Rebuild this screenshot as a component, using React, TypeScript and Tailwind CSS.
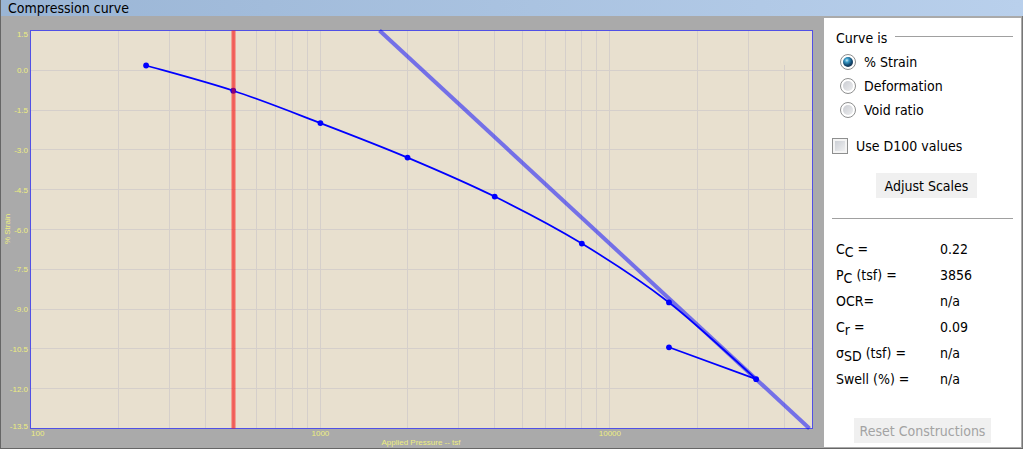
import React, { useState } from 'react';

type Mode = 'strain' | 'deformation' | 'void';

interface Reading {
    pressure: number;
    strain: number;
}

const READINGS: Reading[] = [
    { pressure: 250, strain: 0.18 },
    { pressure: 500, strain: -0.77 },
    { pressure: 1000, strain: -1.99 },
    { pressure: 2000, strain: -3.29 },
    { pressure: 4000, strain: -4.76 },
    { pressure: 8000, strain: -6.53 },
    { pressure: 16000, strain: -8.75 },
    { pressure: 32000, strain: -11.64 },
];

const REBOUND: Reading = { pressure: 16000, strain: -10.44 };

const MODES: { value: Mode; label: string }[] = [
    { value: 'strain', label: '% Strain' },
    { value: 'deformation', label: 'Deformation' },
    { value: 'void', label: 'Void ratio' },
];

const RESULTS = [
    { symbol: 'C', sub: 'C', unit: ' =', value: '0.22' },
    { symbol: 'P', sub: 'C', unit: ' (tsf) =', value: '3856' },
    { symbol: 'OCR', sub: '', unit: '=', value: 'n/a' },
    { symbol: 'C', sub: 'r', unit: ' =', value: '0.09' },
    { symbol: 'σ', sub: 'SD', unit: ' (tsf) =', value: 'n/a' },
    { symbol: 'Swell (%)', sub: '', unit: ' =', value: 'n/a' },
];

// Plot area inside the chart's own coordinate system
const LEFT = 29.5;
const RIGHT = 811.5;
const TOP = 14.5;
const BOTTOM = 412.5;
const ORIGIN_X = 29.9;
const DECADE = 289.5;

const Y_TICKS = [1.5, 0, -1.5, -3, -4.5, -6, -7.5, -9, -10.5, -12, -13.5];
const X_LINES = [
    200, 300, 400, 500, 600, 700, 800, 900, 1000,
    2000, 3000, 4000, 5000, 6000, 7000, 8000, 9000, 10000,
    20000, 30000, 40000,
];

const xOf = (pressure: number) => ORIGIN_X + (Math.log10(pressure) - 2) * DECADE;
const yOf = (strain: number) => TOP + ((1.5 - strain) / 15) * (BOTTOM - TOP);
const crisp = (n: number) => Math.floor(n) + 0.5;

// Catmull-Rom spline through the readings
const smoothPath = (readings: Reading[]) => {
    const pts = readings.map(r => [xOf(r.pressure), yOf(r.strain)]);
    let d = `M${pts[0][0]},${pts[0][1]}`;
    for (let i = 0; i < pts.length - 1; i++) {
        const p0 = pts[i - 1] || pts[i];
        const p1 = pts[i];
        const p2 = pts[i + 1];
        const p3 = pts[i + 2] || p2;
        d += ` C${p1[0] + (p2[0] - p0[0]) / 6},${p1[1] + (p2[1] - p0[1]) / 6}`;
        d += ` ${p2[0] - (p3[0] - p1[0]) / 6},${p2[1] - (p3[1] - p1[1]) / 6}`;
        d += ` ${p2[0]},${p2[1]}`;
    }
    return d;
};

const CompressionChart: React.FC = () => {
    const last = READINGS[READINGS.length - 1];

    return (
        <svg
            viewBox="0 0 823 431"
            className="block w-full h-auto font-['Liberation_Sans',sans-serif] text-[8px]"
            role="img"
            aria-label="Compression curve"
        >
            <rect x={LEFT} y={TOP} width={RIGHT - LEFT} height={BOTTOM - TOP} fill="#e8e0cf" />

            {/* Grid */}
            <g stroke="#d5cfcb">
                {X_LINES.map(p => (
                    <line key={p} x1={crisp(xOf(p))} x2={crisp(xOf(p))} y1={p === 40000 ? 49 : TOP} y2={BOTTOM} />
                ))}
                {Y_TICKS.slice(1, -1).map(s => (
                    <line key={s} x1={LEFT} x2={RIGHT} y1={crisp(yOf(s))} y2={crisp(yOf(s))} />
                ))}
            </g>
            <rect x={LEFT} y={TOP} width={RIGHT - LEFT} height={BOTTOM - TOP} fill="none" stroke="#5050e6" />

            {/* Virgin compression line */}
            <line
                x1={xOf(1600)}
                y1={TOP}
                x2={xOf(48900)}
                y2={BOTTOM}
                stroke="#0000ff"
                strokeOpacity={0.5}
                strokeWidth={4}
            />

            {/* Measured curve */}
            <path d={smoothPath(READINGS)} fill="none" stroke="#0000ff" strokeWidth={1.7} />
            <line
                x1={xOf(last.pressure)}
                y1={yOf(last.strain)}
                x2={xOf(REBOUND.pressure)}
                y2={yOf(REBOUND.strain)}
                stroke="#0000ff"
                strokeWidth={1.7}
            />
            {[...READINGS, REBOUND].map((r, i) => (
                <circle key={i} cx={xOf(r.pressure)} cy={yOf(r.strain)} r={2.9} fill="#0000ff" />
            ))}

            {/* Overburden pressure */}
            <line x1={232.5} x2={232.5} y1={TOP} y2={BOTTOM} stroke="#ff0000" strokeOpacity={0.55} strokeWidth={4} />

            {/* Axis labels */}
            <g fill="#eeee80">
                {Y_TICKS.map((s, i) => {
                    const shift = i === 0 ? 6 : i === Y_TICKS.length - 1 ? 0 : 3;
                    return (
                        <text key={s} x={27} y={yOf(s) + shift} textAnchor="end">
                            {s.toFixed(1)}
                        </text>
                    );
                })}
                <text x={30} y={420}>100</text>
                <text x={xOf(1000)} y={420} textAnchor="middle">1000</text>
                <text x={xOf(10000)} y={420} textAnchor="middle">10000</text>
                <text x={420} y={429} textAnchor="middle">Applied Pressure -- tsf</text>
                <text transform="translate(9 213) rotate(-90)" textAnchor="middle">% Strain</text>
            </g>
        </svg>
    );
};

const App: React.FC = () => {
    const [mode, setMode] = useState<Mode>('strain');
    const [useD100, setUseD100] = useState(false);

    return (
        <div className="bg-[#aaaaaa] border-l border-b border-[#666666] text-black text-sm font-['DejaVu_Sans_Condensed','Noto_Sans',sans-serif]">
            <header className="h-4 pl-[7px] flex items-center bg-linear-to-r from-[#9ab5d5] to-[#b9d0ec]">
                <h1>Compression curve</h1>
            </header>

            <div className="flex items-start">
                <main className="flex-1 min-w-0">
                    <CompressionChart />
                </main>

                <aside className="w-[199px] shrink-0 pt-[2px] pb-px pr-px border-r border-[#777777]">
                    <div className="bg-white pt-2 pb-1 pl-2 pr-2">
                        <fieldset>
                            <legend className="w-full h-6 pl-1 flex items-center gap-2">
                                Curve is
                                <span className="flex-1 h-px mb-1 bg-[#a0a0a0]" />
                            </legend>
                            {MODES.map(m => (
                                <label key={m.value} className="h-6 pl-2 flex items-center gap-2">
                                    <input
                                        type="radio"
                                        name="mode"
                                        checked={mode === m.value}
                                        onChange={() => setMode(m.value)}
                                        className="appearance-none size-4 p-[2px] rounded-full border border-[#8e8f8f] bg-[#f6f6f6] bg-clip-content bg-linear-to-br from-[#c3c6cc] to-[#f4f4f5] checked:bg-[radial-gradient(circle_at_42%_38%,#c8ecf8_0,#3b9cc8_2px,#12486f_5px,#1c3550_7px)]"
                                    />
                                    {m.label}
                                </label>
                            ))}
                        </fieldset>

                        <label className="h-6 mt-3 flex items-center gap-2">
                            <input
                                type="checkbox"
                                checked={useD100}
                                onChange={e => setUseD100(e.target.checked)}
                                className="appearance-none size-4 border border-[#8e8f8f] bg-linear-to-br from-[#c5c9d0] to-[#f6f6f6] shadow-[inset_0_0_0_2px_#f4f4f4] checked:bg-[#1c5a85]"
                            />
                            Use D100 values
                        </label>

                        <div className="mt-[15px] pl-2 flex justify-center">
                            <button type="button" className="h-[25px] px-[9px] bg-[#f0f0f0]">
                                Adjust Scales
                            </button>
                        </div>

                        <hr className="mt-5 border-[#a0a0a0]" />

                        <table className="mt-[17px] w-full text-left">
                            <tbody>
                                {RESULTS.map((r, i) => (
                                    <tr key={i} className="h-[26px]">
                                        <th scope="row" className="w-[108px] pl-1 font-normal whitespace-pre">
                                            {r.symbol}
                                            {r.sub && <sub className="static align-[-3px] text-sm leading-none">{r.sub}</sub>}
                                            {r.unit}
                                        </th>
                                        <td>{r.value}</td>
                                    </tr>
                                ))}
                            </tbody>
                        </table>

                        <div className="mt-[26px] flex justify-center">
                            <button type="button" disabled className="h-[25px] px-[6px] bg-[#f0f0f0] text-[#a3a3a3]">
                                Reset Constructions
                            </button>
                        </div>
                    </div>
                </aside>
            </div>
        </div>
    );
};

export default App;
